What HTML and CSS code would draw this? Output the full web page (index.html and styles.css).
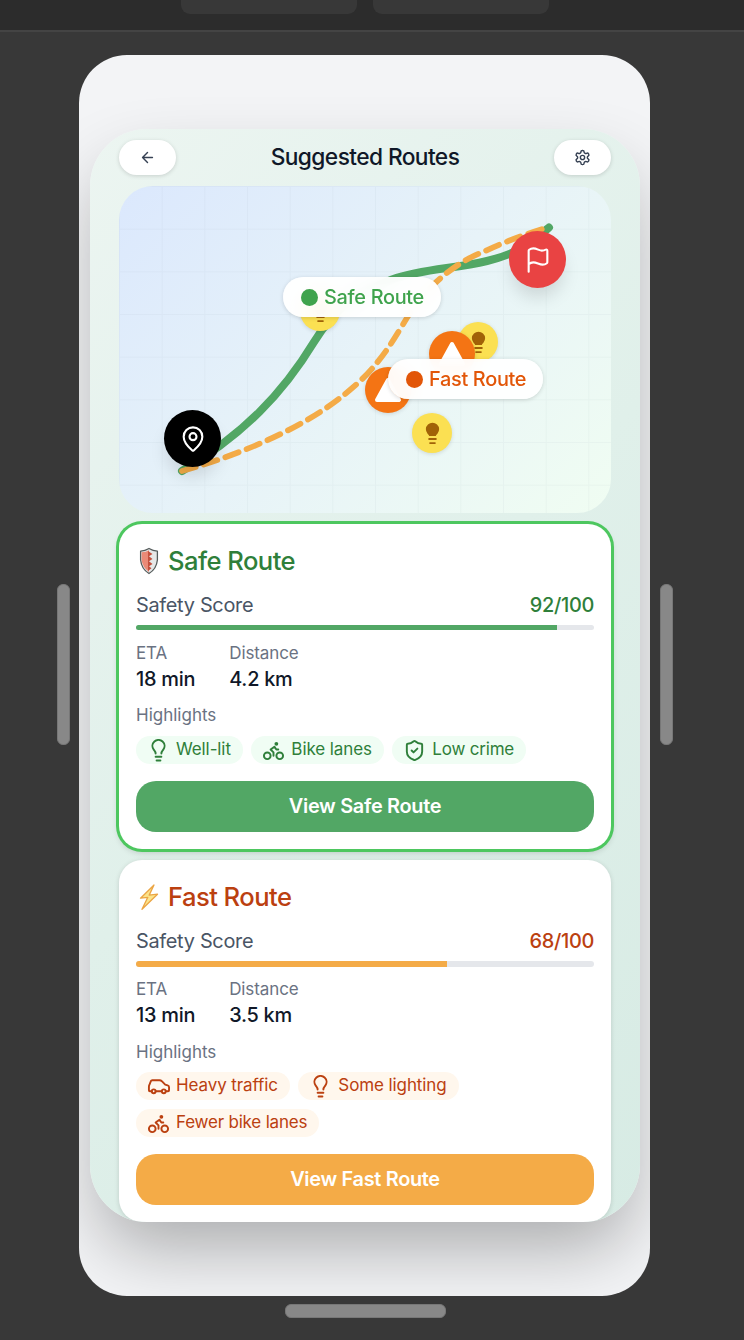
FILE: index.html
```html
<!DOCTYPE html>
<html lang="en">
<head>
<meta charset="utf-8">
<title>Suggested Routes</title>
<link rel="stylesheet" href="styles.css">
</head>
<body>
<svg width="0" height="0" class="defs">
  <symbol id="bulb" viewBox="0 0 24 24"><path d="M9 15.200c0-1.900-.8-2.600-2-4.100a6.300 6.300 0 1 1 10 0c-1.200 1.500-2 2.200-2 4.100M9 18.500h6M10 22.500h4"/></symbol>
  <symbol id="bike" viewBox="0 0 24 24"><circle cx="18.500" cy="17.500" r="3.500"/><circle cx="5.500" cy="17.500" r="3.500"/><circle cx="15" cy="5" r="1"/><path d="M12 17.500V14l-3-3 4-3 2 3h2"/></symbol>
  <symbol id="shield" viewBox="0 0 24 24"><path d="M20 13c0 5-3.500 7.500-7.660 8.950a1 1 0 0 1-.67-.01C7.500 20.500 4 18 4 13V6a1 1 0 0 1 1-1c2 0 4.500-1.200 6.240-2.720a1.170 1.170 0 0 1 1.520 0C14.510 3.810 17 5 19 5a1 1 0 0 1 1 1z"/><path d="m9 12 2 2 4-4"/></symbol>
  <symbol id="car" viewBox="0 0 24 24"><path d="M5 17H3a1 1 0 0 1-1-1v-4c0-.9.400-1.500.800-2.400L4 6.500A1.700 1.700 0 0 1 5.500 5.500h7.500c1 0 2 .5 2.700 1.200L19 10l2.500.8c.9.300 1.500 1 1.500 1.900V16a1 1 0 0 1-1 1h-2M9 17h6"/><circle cx="7" cy="17" r="2"/><circle cx="17.500" cy="17" r="2"/></symbol>
  <symbol id="lamp" viewBox="0 0 24 24"><path class="lamp-fill" d="M8.500 14.500c-.2-1-1-1.500-1.800-2.500a6.900 6.900 0 1 1 10.600 0c-.8 1-1.600 1.500-1.800 2.500z"/><path d="M8.500 17.800h7M9.500 22h5"/></symbol>
</svg>

<header class="toolbar"><span class="tab"></span><span class="tab"></span></header>
<main class="stage">
  <span class="handle"></span>
  <div class="frame">
    <div class="screen">
      <div class="nav">
        <button class="nav-btn"><svg class="ic-16" viewBox="0 0 24 24"><path d="m12 19-7-7 7-7M19 12H5"/></svg></button>
        <h1>Suggested Routes</h1>
        <button class="nav-btn"><svg class="ic-17" viewBox="0 0 24 24"><path d="M12.220 2h-.44a2 2 0 0 0-2 2v.18a2 2 0 0 1-1 1.730l-.43.250a2 2 0 0 1-2 0l-.15-.08a2 2 0 0 0-2.730.730l-.22.380a2 2 0 0 0 .730 2.730l.150.100a2 2 0 0 1 1 1.720v.510a2 2 0 0 1-1 1.740l-.15.090a2 2 0 0 0-.73 2.730l.22.380a2 2 0 0 0 2.730.730l.150-.08a2 2 0 0 1 2 0l.430.250a2 2 0 0 1 1 1.730V20a2 2 0 0 0 2 2h.440a2 2 0 0 0 2-2v-.18a2 2 0 0 1 1-1.730l.430-.25a2 2 0 0 1 2 0l.150.080a2 2 0 0 0 2.730-.73l.220-.39a2 2 0 0 0-.73-2.730l-.15-.08a2 2 0 0 1-1-1.740v-.5a2 2 0 0 1 1-1.740l.150-.09a2 2 0 0 0 .730-2.730l-.22-.38a2 2 0 0 0-2.730-.73l-.15.080a2 2 0 0 1-2 0l-.43-.25a2 2 0 0 1-1-1.730V4a2 2 0 0 0-2-2z"/><circle cx="12" cy="12" r="3"/></svg></button>
      </div>

      <section class="map">
        <svg class="map-canvas" viewBox="0 0 492 327">
          <defs><pattern id="grid" width="42.667" height="42.667" patternUnits="userSpaceOnUse"><path d="M42.667 0H0V42.667" fill="none" stroke="#64748b" stroke-opacity=".05" stroke-width="2"/></pattern></defs>
          <rect width="492" height="327" fill="url(#grid)"/>
          <path class="line safe-line" d="M63 285C125 248 164 207 195 156C219 117 242 106 273 93.500C304 82.500 335 83 368 75S412 57 430 41.500"/>
          <path class="line fast-line" d="M63 285C128 267 190 238 226 208C262 180 277 149 291 127C306 103 335 77 363 66.500C387 55 410 47 430 41"/>
        </svg>
        <span class="pin lamp p-lamp1"><svg><use href="#lamp"/></svg></span>
        <span class="pin lamp p-lamp2"><svg><use href="#lamp"/></svg></span>
        <span class="pin lamp p-lamp3"><svg><use href="#lamp"/></svg></span>
        <span class="pin alert p-alert1"><svg viewBox="0 0 28 28"><path d="M14 4 25 24H3z"/></svg></span>
        <span class="pin alert p-alert2"><svg viewBox="0 0 28 28"><path d="M14 4 25 24H3z"/></svg></span>
        <span class="pin big start"><svg viewBox="0 0 24 24"><path d="M20 10c0 4.990-5.540 10.190-7.400 11.800a1 1 0 0 1-1.200 0C9.540 20.190 4 14.990 4 10a8 8 0 0 1 16 0"/><circle cx="12" cy="10" r="3"/></svg></span>
        <span class="pin big end"><svg viewBox="0 0 24 24"><path d="M4 22V4a1 1 0 0 1 .4-.8A6 6 0 0 1 8 2c3 0 5 2 7.330 2q2 0 3.070-.8A1 1 0 0 1 20 4v10a1 1 0 0 1-.4.800A6 6 0 0 1 16 16c-3 0-5-2-8-2a6 6 0 0 0-4 1.530"/></svg></span>
        <span class="label label-safe"><i></i>Safe Route</span>
        <span class="label label-fast"><i></i>Fast Route</span>
      </section>

      <article class="card safe">
        <h2><svg class="emoji" viewBox="0 0 26 28"><path d="M4.600 4.200Q9 3.800 13 1.500Q17 3.800 21.400 4.200V13Q20.500 22 13 26.500Q5.500 22 4.600 13Z" fill="#e6e8e8" stroke="#555c5c" stroke-width="1.300"/><path d="M5.600 5.200Q10 5 13 3.200V25Q6.400 20 5.600 13Z" fill="#ea8a77"/><path d="M12 4l4.500 3-3.500 2.300 3.500 2.700-3.500 2.300 3.500 2.700-3.500 2.300 2.500 2-3.500 2.700z" fill="#c4513e"/></svg>Safe Route</h2>
        <div class="score"><span>Safety Score</span><b>92/100</b></div>
        <div class="bar"><span style="width:92%"></span></div>
        <dl><div><dt>ETA</dt><dd>18 min</dd></div><div><dt>Distance</dt><dd>4.2 km</dd></div></dl>
        <h3>Highlights</h3>
        <div class="chips">
          <span class="chip"><svg><use href="#bulb"/></svg>Well-lit</span>
          <span class="chip"><svg><use href="#bike"/></svg>Bike lanes</span>
          <span class="chip"><svg><use href="#shield"/></svg>Low crime</span>
        </div>
        <button class="cta">View Safe Route</button>
      </article>

      <article class="card fast">
        <h2><svg class="emoji" viewBox="0 0 26 28"><path d="M18 2 4.500 15.200l7.300-.9L6 26.300 21.500 11.200l-8.300.9z" fill="#fbe48b" stroke="#eba544" stroke-width="1.300" stroke-linejoin="round"/></svg>Fast Route</h2>
        <div class="score"><span>Safety Score</span><b>68/100</b></div>
        <div class="bar"><span style="width:68%"></span></div>
        <dl><div><dt>ETA</dt><dd>13 min</dd></div><div><dt>Distance</dt><dd>3.5 km</dd></div></dl>
        <h3>Highlights</h3>
        <div class="chips">
          <span class="chip"><svg><use href="#car"/></svg>Heavy traffic</span>
          <span class="chip"><svg><use href="#bulb"/></svg>Some lighting</span>
          <span class="chip"><svg><use href="#bike"/></svg>Fewer bike lanes</span>
        </div>
        <button class="cta">View Fast Route</button>
      </article>
    </div>
  </div>
  <span class="handle"></span>
</main>
<footer class="dock"><span class="grip"></span></footer>
</body>
</html>
```

FILE: styles.css
```css
* { box-sizing: border-box; margin: 0; padding: 0; }
body { width: 744px; height: 1340px; overflow: hidden; background: #383838; font-family: Inter, "Liberation Sans", sans-serif; color: #101828; }
button { border: 0; font: inherit; }
svg { display: block; fill: none; stroke: currentColor; stroke-width: 2; stroke-linecap: round; stroke-linejoin: round; }
.defs { position: absolute; }

.toolbar { height: 32px; display: flex; justify-content: center; gap: 16px; padding-right: 14px; background: #2c2c2c; border-bottom: 2px solid #444; }
.tab { width: 176px; height: 14px; background: #383838; border-radius: 0 0 9px 9px; }
.stage { height: 1264px; display: flex; align-items: center; gap: 9.500px; padding-left: 57px; }
.handle { width: 13px; height: 161px; border-radius: 6px; background: #888; border: 1px solid #777; }
.frame { width: 571px; height: 1241px; margin-top: 23px; align-self: flex-start; border-radius: 48px; overflow: hidden; background: #f3f4f6; padding: 74px 10px 74px 11px; }
.stage .frame { margin-left: -.5px; }
.screen { height: 1093px; border-radius: 57px; background: linear-gradient(135deg, #ecf5f1, #e0f0ea 50%, #d7ebe4); box-shadow: 0 34px 71px -8px rgba(0,0,0,.3); padding: 11px 29px 0; overflow: hidden; }

.nav { height: 35px; display: flex; align-items: center; justify-content: space-between; }
.nav h1 { font-size: 22.750px; font-weight: 500; letter-spacing: -.6px; line-height: 33px; padding-bottom: 2px; }
.nav-btn { width: 57px; height: 35px; border-radius: 18px; background: #fff; display: grid; place-items: center; color: #364153; box-shadow: 0 1px 4px rgba(0,0,0,.15); }
.ic-16, .ic-17 { width: 17px; height: 17px; }

.map { position: relative; height: 327px; margin-top: 11px; border-radius: 34px; overflow: hidden; background: linear-gradient(135deg, #dbe8fd, #e7f3f8 50%, #f0fdf2); }
.map-canvas { width: 492px; height: 327px; stroke: none; }
.line { fill: none; stroke-linecap: round; }
.safe-line { stroke: #52a765; stroke-width: 8; }
.fast-line { stroke: #f4ab47; stroke-width: 5.700; stroke-dasharray: 14.200 8.500; }
.pin { position: absolute; display: grid; place-items: center; border-radius: 50%; box-shadow: 0 1px 4px rgba(0,0,0,.13); }
.lamp { width: 40px; height: 40px; background: #fbe052; color: #a16207; }
.lamp svg { width: 23px; height: 23px; }
.lamp-fill { fill: #a16207; stroke: none; }
.p-lamp1 { left: 181px; top: 105px; }
.p-lamp2 { left: 339px; top: 136px; }
.p-lamp3 { left: 293px; top: 227px; }
.alert { width: 46px; height: 46px; background: #f47414; color: #fff; }
.alert svg { width: 28px; height: 28px; fill: #fff; stroke-width: 4; }
.p-alert1 { left: 310px; top: 145px; }
.p-alert2 { left: 246px; top: 181px; }
.big { width: 57px; height: 57px; color: #fff; box-shadow: 0 12px 18px -3px rgba(0,0,0,.13); }
.big svg { width: 28px; height: 28px; stroke-width: 1.800; }
.start { left: 45px; top: 224px; background: #000; }
.end { left: 390px; top: 45px; background: #e94343; }
.label { position: absolute; height: 40px; display: flex; align-items: center; gap: 6px; border-radius: 20px; padding-left: 18px; font-size: 19.900px; font-weight: 500; letter-spacing: -.3px; background: rgba(255,255,255,.95); backdrop-filter: blur(8px); box-shadow: 0 1px 4px rgba(0,0,0,.15); white-space: nowrap; }
.label i { width: 17px; height: 17px; border-radius: 50%; background: currentColor; }
.label-safe { left: 164px; top: 91px; width: 158px; color: #3fa34d; }
.label-fast { left: 269px; top: 173px; width: 155px; color: #e25608; }

.card { margin-top: 11px; border-radius: 23px; padding: 17px; background: #fff; box-shadow: 0 1px 5px rgba(0,0,0,.14); }
.safe { --accent: #2f7f3a; --fill: #52a765; --tint: #f0fdf4; box-shadow: 0 0 0 3px #4dc75f, 0 3px 7px rgba(0,0,0,.2); }
.fast { --accent: #bb4010; --fill: #f4ab47; --tint: #fff7ed; }
.card h2 { height: 39px; display: flex; align-items: center; gap: 6px; font-size: 25.600px; font-weight: 500; letter-spacing: -.55px; color: var(--accent); }
.emoji { width: 26px; height: 28px; stroke: none; }
.score { height: 37px; margin-top: 6px; display: flex; align-items: center; justify-content: space-between; font-size: 19.900px; letter-spacing: -.3px; color: #4a5565; }
.score b { font-weight: 450; color: var(--accent); }
.bar { height: 5px; margin-top: 2px; border-radius: 3px; overflow: hidden; background: #e5e7eb; }
.fast .bar { height: 6px; }
.bar span { display: block; height: 100%; background: var(--fill); }
.card dl { display: flex; gap: 34px; margin-top: 11px; letter-spacing: -.1px; }
.fast dl { margin-top: 10px; }
.card dt { height: 24px; line-height: 24px; font-size: 17px; color: #6a7282; }
.card dd { height: 28px; line-height: 28px; font-size: 19.900px; font-weight: 450; letter-spacing: -.25px; }
.card h3 { height: 24px; line-height: 24px; margin-top: 10px; font-size: 17px; font-weight: 400; color: #6a7282; }
.fast h3 { margin-top: 11px; }
.chips { display: flex; flex-wrap: wrap; gap: 9px 8.500px; margin-top: 9px; }
.fast .chips { margin-top: 8px; }
.chip { height: 28px; display: flex; align-items: center; gap: 6px; padding: 0 12px 2px 11px; border-radius: 14px; font-size: 17px; letter-spacing: -.1px; color: var(--accent); background: var(--tint); }
.chip:nth-child(3) { letter-spacing: -.2px; }
.chip svg { width: 23px; height: 23px; position: relative; top: 1px; }
.cta { display: block; width: 100%; height: 51px; margin-top: 17px; padding-bottom: 2px; border-radius: 20px; background: var(--fill); color: #fff; font-size: 19.900px; font-weight: 600; letter-spacing: -.3px; }

.dock { height: 44px; padding-top: 8px; display: flex; justify-content: center; align-items: flex-start; padding-right: 14px; }
.grip { width: 161px; height: 14px; border-radius: 6px; background: #888; border: 1px solid #777; }
```
